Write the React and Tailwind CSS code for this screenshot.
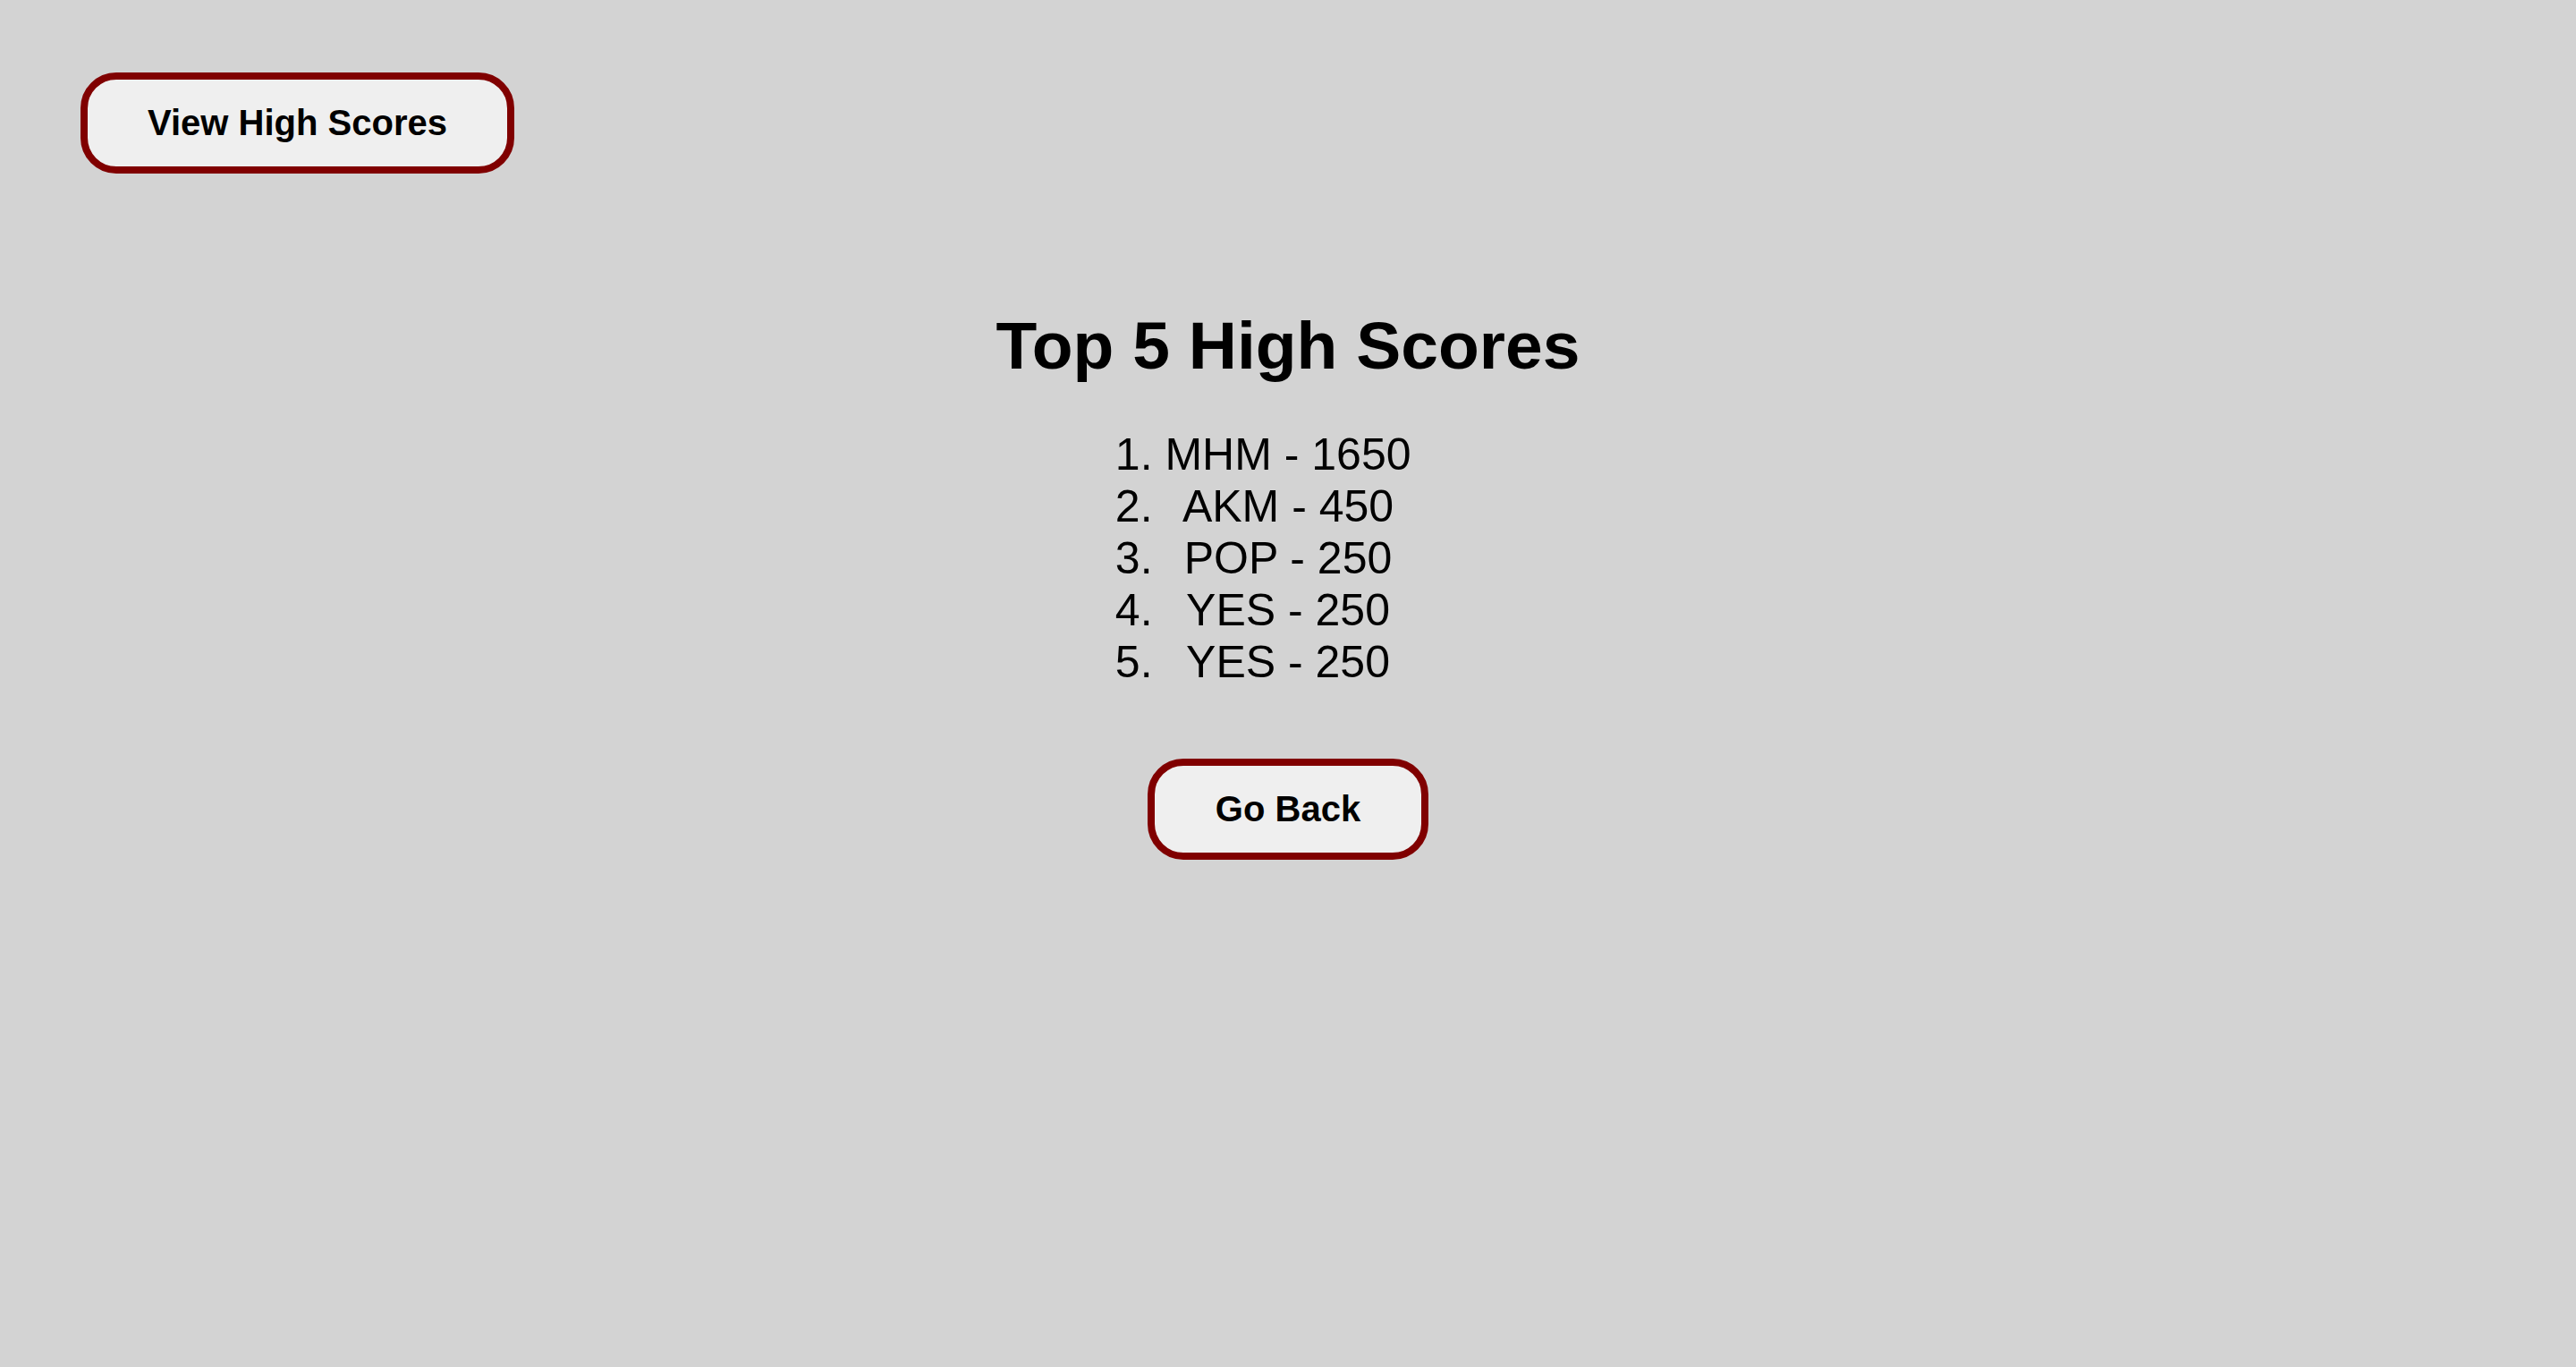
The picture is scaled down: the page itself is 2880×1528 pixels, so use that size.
import React from 'react';

const scores = [
    { name: 'MHM', score: 1650 },
    { name: 'AKM', score: 450 },
    { name: 'POP', score: 250 },
    { name: 'YES', score: 250 },
    { name: 'YES', score: 250 },
];

function App() {
    return (
        <div className="min-h-screen bg-[#d3d3d3] text-black font-['Liberation_Sans',Arial,sans-serif]">
            {/* Top bar */}
            <div className="pt-[81px] pl-[90px]">
                <button className="px-[67px] py-[25px] text-[40px] leading-[47px] font-bold bg-[#efefef] border-[8px] border-[#800000] rounded-[40px]">
                    View High Scores
                </button>
            </div>

            {/* High scores */}
            <div className="flex flex-col items-center mt-[150px]">
                <h1 className="text-[75px] leading-[85px] font-bold">Top 5 High Scores</h1>
                <ol className="list-decimal w-fit mt-[50px] text-[50px] leading-[58px]">
                    {scores.map((s, i) => (
                        <li key={i} className="text-center">
                            {s.name} - {s.score}
                        </li>
                    ))}
                </ol>
                <button className="mt-[79px] px-[68px] py-[25px] text-[40px] leading-[47px] font-bold bg-[#efefef] border-[8px] border-[#800000] rounded-[40px]">
                    Go Back
                </button>
            </div>
        </div>
    );
}

export default App;
